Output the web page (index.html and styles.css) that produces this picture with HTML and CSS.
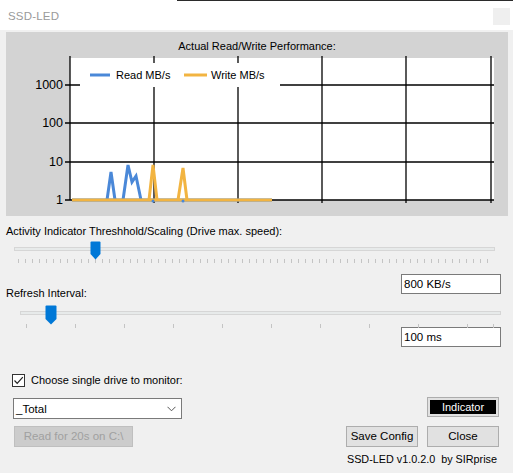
FILE: index.html
```html
<!DOCTYPE html>
<html>
<head>
<meta charset="utf-8">
<link rel="stylesheet" href="styles.css">
</head>
<body>
<div class="topline"></div>
<div class="titlebar">
  <span class="title">SSD-LED</span>
  <span class="closebox"></span>
</div>
<div class="content">
  <div class="panel">
    <svg class="chart" width="502" height="184" viewBox="0 0 502 184">
      <text x="251" y="18" text-anchor="middle" class="ctitle">Actual Read/Write Performance:</text>
      <rect x="64" y="26" width="424" height="142" fill="#fff"/>
      <g stroke="#000" stroke-width="1.3" fill="none">
        <line x1="59" y1="53" x2="488" y2="53"/>
        <line x1="59" y1="91" x2="488" y2="91"/>
        <line x1="59" y1="130" x2="488" y2="130"/>
        <line x1="59" y1="168" x2="488" y2="168"/>
        <line x1="64" y1="24" x2="64" y2="168"/>
        <line x1="148" y1="24" x2="148" y2="171"/>
        <line x1="232" y1="24" x2="232" y2="171"/>
        <line x1="316" y1="24" x2="316" y2="171"/>
        <line x1="400" y1="24" x2="400" y2="171"/>
        <line x1="485" y1="24" x2="485" y2="171"/>
      </g>
      <rect x="74" y="31" width="200" height="24" fill="#fff"/>
      <line x1="84" y1="43" x2="104" y2="43" stroke="#4a88d8" stroke-width="3"/>
      <text x="110" y="47" class="legend">Read MB/s</text>
      <line x1="178" y1="43" x2="201" y2="43" stroke="#f2b441" stroke-width="3"/>
      <text x="205" y="47" class="legend">Write MB/s</text>
      <g class="ylab" text-anchor="end">
        <text x="57" y="57">1000</text>
        <text x="57" y="95">100</text>
        <text x="57" y="134">10</text>
        <text x="57" y="172">1</text>
      </g>
      <g fill="none" stroke-width="3" stroke-linejoin="miter">
        <polyline points="66,168 266,168" stroke="#4a88d8"/>
        <polyline points="101,168 105,140 109,168" stroke="#4a88d8"/>
        <polyline points="117,168 122,133 126,150 130,144 135,168" stroke="#4a88d8"/>
        <polyline points="66,168 266,168" stroke="#f2b441"/>
        <polyline points="143,168 147,133 151,168" stroke="#f2b441"/>
        <polyline points="172,168 177,136 181,168" stroke="#f2b441"/>
        <circle cx="147" cy="169" r="1.5" fill="#4a88d8" stroke="none"/>
        <circle cx="177" cy="169" r="1.5" fill="#4a88d8" stroke="none"/>
      </g>
    </svg>
  </div>

  <div class="label label1">Activity Indicator Threshhold/Scaling (Drive max. speed):</div>
  <div class="slider slider1">
    <div class="track"></div>
    <div class="ticks"></div>
    <svg class="thumb" width="11" height="19" viewBox="0 0 11 19"><path d="M0.5 1.5 Q0.5 0.5 1.5 0.5 H9.5 Q10.5 0.5 10.5 1.5 V13 L5.5 18.5 L0.5 13 Z" fill="#0078d7"/></svg>
  </div>
  <div class="row row-refresh">
    <div class="label label2">Refresh Interval:</div>
    <div class="textbox">800 KB/s</div>
  </div>
  <div class="slider slider2">
    <div class="track"></div>
    <div class="ticks"></div>
    <div class="lasttick"></div>
    <svg class="thumb" width="12" height="20" viewBox="0 0 12 20"><path d="M0.5 1.5 Q0.5 0.5 1.5 0.5 H10.5 Q11.5 0.5 11.5 1.5 V14 L6 19.5 L0.5 14 Z" fill="#0078d7"/></svg>
  </div>
  <div class="row row-tb2">
    <div class="textbox">100 ms</div>
  </div>

  <div class="checkrow">
    <span class="checkbox"><svg width="11" height="11" viewBox="0 0 11 11"><path d="M1.5 5.5 L4.2 8.3 L9.8 2.2" fill="none" stroke="#222" stroke-width="1.2"/></svg></span>
    <span class="checklabel">Choose single drive to monitor:</span>
  </div>
  <div class="row row-combo">
    <div class="combo">
      <span>_Total</span>
      <svg class="chev" width="9" height="6" viewBox="0 0 9 6"><path d="M0.5 0.8 L4.5 4.8 L8.5 0.8" fill="none" stroke="#555" stroke-width="1"/></svg>
    </div>
    <div class="indicator"><span>Indicator</span></div>
  </div>
  <div class="row row-buttons">
    <div class="btn disabled">Read for 20s on C:\</div>
    <div class="rightbtns">
      <div class="btn save">Save Config</div>
      <div class="btn close">Close</div>
    </div>
  </div>
  <div class="version">SSD-LED v1.0.2.0&nbsp; by SIRprise</div>
</div>
</body>
</html>
```
FILE: styles.css
```css
html, body {
  margin: 0;
  padding: 0;
}
body {
  width: 513px;
  height: 473px;
  overflow: hidden;
  background: #f0f0f0;
  font-family: "Liberation Sans", Arial, sans-serif;
  font-size: 11px;
  color: #000;
}
.topline {
  height: 1px;
  background: linear-gradient(to right, #ffffff 0 177px, #2b2b2b 177px);
}
.titlebar {
  height: 29px;
  background: #fff;
  display: flex;
  align-items: center;
  justify-content: space-between;
  padding: 0 3px 0 8px;
}
.title {
  color: #9a9a9a;
  font-size: 11.5px;
  letter-spacing: 0.2px;
}
.closebox {
  width: 17px;
  height: 17px;
  background: #efefef;
  margin-top: 2px;
}
.content {
  padding: 2px 12px 0 6px;
}
.panel {
  width: 502px;
  height: 184px;
  background: #d3d3d3;
}
.chart {
  display: block;
}
.ctitle {
  font-family: "Liberation Sans", Arial, sans-serif;
  font-size: 11px;
}
.legend {
  font-family: "Liberation Sans", Arial, sans-serif;
  font-size: 11px;
}
.ylab text {
  font-family: "Liberation Sans", Arial, sans-serif;
  font-size: 12.5px;
}
.label {
  line-height: 13px;
  height: 13px;
  white-space: nowrap;
}
.label1 {
  margin-top: 9px;
  font-size: 11px;
}
.slider {
  position: relative;
}
.slider1 {
  height: 28px;
}
.slider1 .track {
  position: absolute;
  left: 8px;
  top: 9px;
  width: 479px;
  height: 2px;
  background: #e7eaea;
  border: 1px solid #d6d6d6;
}
.slider1 .ticks {
  position: absolute;
  left: 12px;
  top: 21px;
  width: 472px;
  height: 4px;
  background: repeating-linear-gradient(to right, #c4c4c4 0 1px, transparent 1px 7px);
}
.slider1 .thumb {
  position: absolute;
  left: 84px;
  top: 3px;
}
.row {
  display: flex;
  justify-content: space-between;
}
.row-refresh {
  margin-top: 8px;
  height: 26px;
}
.label2 {
  align-self: flex-end;
  font-size: 11px;
}
.textbox {
  box-sizing: border-box;
  width: 100px;
  height: 20px;
  background: #fff;
  border: 1px solid #7a7a7a;
  padding-left: 2px;
  line-height: 18px;
  font-size: 11.5px;
  margin-left: auto;
}
.row-refresh .textbox {
  align-self: flex-start;
}
.slider2 {
  height: 27px;
}
.slider2 .track {
  position: absolute;
  left: 14px;
  top: 11px;
  width: 479px;
  height: 2px;
  background: #e7eaea;
  border: 1px solid #d6d6d6;
}
.slider2 .ticks {
  position: absolute;
  left: 20px;
  top: 24px;
  width: 469px;
  height: 4px;
  background: repeating-linear-gradient(to right, #c4c4c4 0 1px, transparent 1px 49px);
}
.slider2 .lasttick {
  position: absolute;
  left: 487px;
  top: 24px;
  width: 1px;
  height: 4px;
  background: #c4c4c4;
}
.slider2 .thumb {
  position: absolute;
  left: 39px;
  top: 5px;
}
.row-tb2 {
  height: 20px;
}
.checkrow {
  margin-top: 25px;
  height: 16px;
  display: flex;
  align-items: center;
  padding-left: 6px;
}
.checkbox {
  box-sizing: border-box;
  width: 13px;
  height: 13px;
  border: 1px solid #333;
  background: #fff;
  display: flex;
  align-items: center;
  justify-content: center;
}
.checklabel {
  margin-left: 6px;
  font-size: 11px;
}
.row-combo {
  margin-top: 9px;
  height: 21px;
  padding-left: 7px;
  padding-right: 2px;
}
.combo {
  box-sizing: border-box;
  width: 169px;
  height: 21px;
  margin-top: 1px;
  background: #fff;
  border: 1px solid #7a7a7a;
  display: flex;
  align-items: center;
  justify-content: space-between;
  padding: 0 5px 0 2px;
  font-size: 11.5px;
}
.indicator {
  box-sizing: border-box;
  width: 72px;
  height: 20px;
  border: 1px solid #adadad;
  background: #e1e1e1;
  padding: 2px;
}
.indicator span {
  display: block;
  height: 100%;
  background: #000;
  color: #fff;
  text-align: center;
  line-height: 14px;
  font-size: 11px;
}
.row-buttons {
  margin-top: 8px;
  height: 21px;
  padding-left: 8px;
  padding-right: 2px;
}
.btn {
  box-sizing: border-box;
  height: 21px;
  border: 1px solid #adadad;
  background: #e1e1e1;
  text-align: center;
  line-height: 19px;
  font-size: 11.5px;
}
.btn.disabled {
  width: 119px;
  background: #cccccc;
  border-color: #bfbfbf;
  color: #a0a0a0;
}
.rightbtns {
  display: flex;
  gap: 9px;
}
.btn.save {
  width: 72px;
}
.btn.close {
  width: 72px;
}
.version {
  margin-top: 5px;
  text-align: right;
  padding-right: 4px;
  font-size: 10.8px;
  line-height: 14px;
}
```
